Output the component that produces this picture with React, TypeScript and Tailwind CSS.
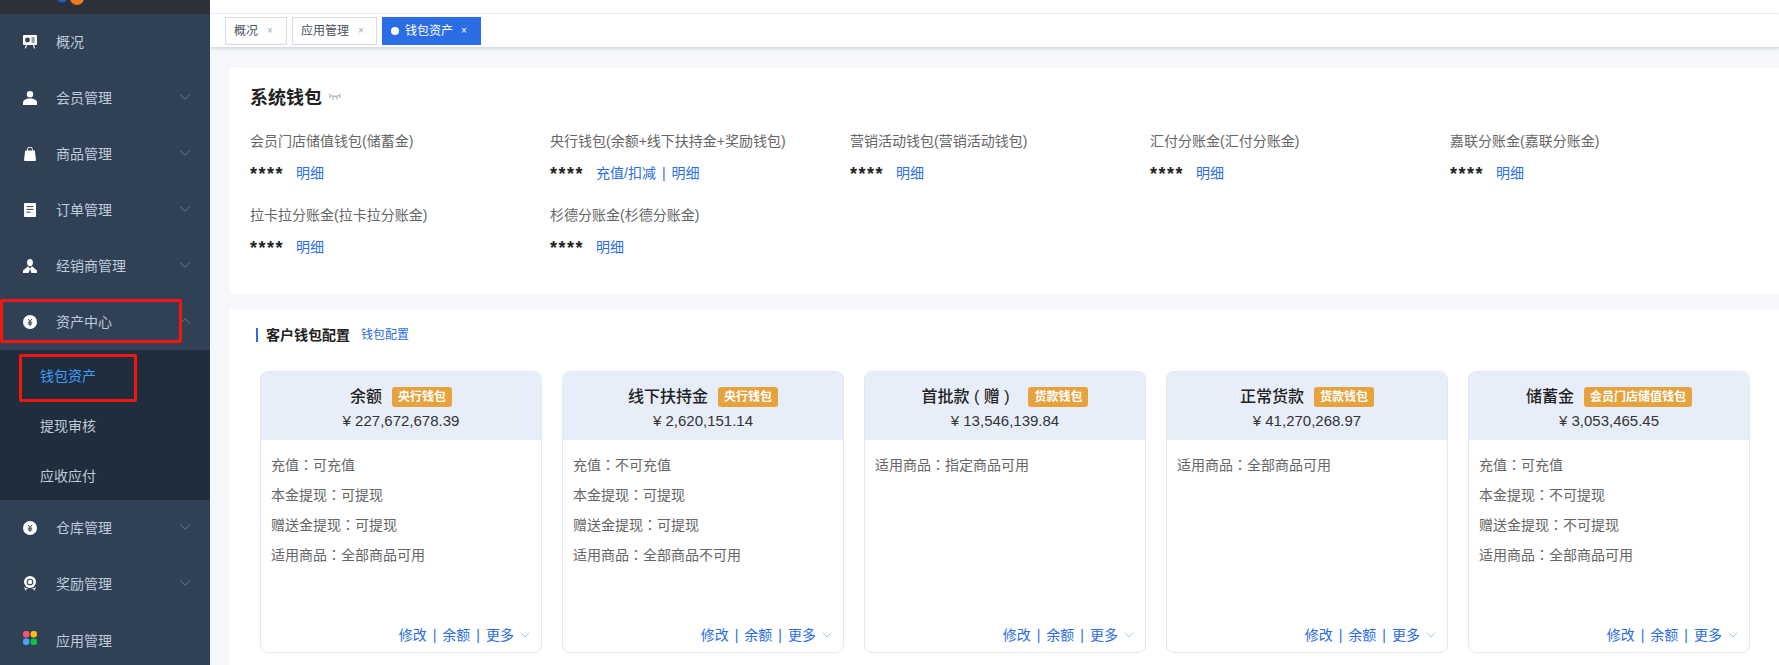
import { ChevronDown, ChevronUp } from 'lucide-react'
import type { ReactNode } from 'react'

const FONT = "font-['Liberation_Sans','Noto_Sans_CJK_SC',sans-serif]"

function BoardIcon() {
  return (
    <svg width="14" height="14" viewBox="0 0 14 14">
      <path d="M1 0h12a1 1 0 0 1 1 1v8a1 1 0 0 1-1 1H1a1 1 0 0 1-1-1V1a1 1 0 0 1 1-1z" fill="#fff" />
      <circle cx="4.5" cy="5" r="2.4" fill="#304156" />
      <path d="M8.5 3h3.2M8.5 5h3.2M8.5 7h3.2" stroke="#304156" strokeWidth="1" />
      <path d="M3.5 10 2.4 13.4M10.5 10l1.1 3.4" stroke="#fff" strokeWidth="1.1" />
    </svg>
  )
}

function UserIcon() {
  return (
    <svg width="14" height="14" viewBox="0 0 14 14">
      <circle cx="7" cy="3.2" r="3.2" fill="#fff" />
      <path d="M0 14v-2.2C0 9 2.6 7.4 7 7.4s7 1.6 7 4.4V14z" fill="#fff" />
    </svg>
  )
}

function BagIcon() {
  return (
    <svg width="14" height="14" viewBox="0 0 14 14">
      <path d="M2.2 3.4h9.6L13 13a1 1 0 0 1-1 1H2a1 1 0 0 1-1-1z" fill="#fff" />
      <path d="M4.6 4.5V2.4a2.4 2.4 0 0 1 4.8 0v2.1" fill="none" stroke="#fff" strokeWidth="1" />
    </svg>
  )
}

function DocIcon() {
  return (
    <svg width="12" height="14" viewBox="0 0 12 14">
      <rect width="12" height="14" rx="0.8" fill="#fff" />
      <path d="M2.6 3.6h6.8M2.6 6.4h6.8M2.6 9.2h4" stroke="#304156" strokeWidth="1" />
    </svg>
  )
}

function DealerIcon() {
  return (
    <svg width="14" height="14" viewBox="0 0 14 14">
      <ellipse cx="7" cy="3.6" rx="2.9" ry="3.6" fill="#fff" />
      <path d="M5 7.2 0 11.6V14h5.6L7 10l1.4 4H14v-2.4L9 7.2 7 9.5z" fill="#fff" />
    </svg>
  )
}

function CoinIcon() {
  return (
    <svg width="14" height="14" viewBox="0 0 14 14">
      <circle cx="7" cy="7" r="7" fill="#fff" />
      <path d="M5 4l2 2.4L9 4M4.8 7.2h4.4M4.8 9h4.4M7 6.4V11" fill="none" stroke="#304156" strokeWidth="1" />
    </svg>
  )
}

function AwardIcon() {
  return (
    <svg width="14" height="15" viewBox="0 0 14 15">
      <circle cx="7" cy="6" r="6" fill="#fff" />
      <circle cx="7" cy="6" r="2.8" fill="none" stroke="#304156" strokeWidth="1.1" />
      <path d="M1 11.5 3 13l1.5-.6M13 11.5 11 13l-1.5-.6M3 13l-.6 1.4M11 13l.6 1.4" fill="none" stroke="#fff" strokeWidth="1" />
    </svg>
  )
}

function AppIcon() {
  return (
    <svg width="14" height="14" viewBox="0 0 14 14" className="-translate-y-[2px]">
      <rect width="6.4" height="6.4" rx="2.4" fill="#f4566f" />
      <rect x="7.6" width="6.4" height="6.4" rx="2.4" fill="#fdbf0f" />
      <rect y="7.6" width="6.4" height="6.4" rx="2.4" fill="#4aa5f8" />
      <rect x="7.6" y="7.6" width="6.4" height="6.4" rx="2" fill="#0bc53a" />
    </svg>
  )
}

function LashIcon() {
  return (
    <svg width="14" height="8" viewBox="0 0 14 8" className="ml-[6px] -translate-y-[1px]">
      <path
        d="M1 1c2.8 3.2 9.2 3.2 12 0M2.8 2.8 1.4 5M5.2 3.9 4.6 6.6M8.8 3.9l.6 2.7M11.2 2.8 12.6 5"
        fill="none"
        stroke="#a8a8a8"
        strokeWidth="1.1"
      />
    </svg>
  )
}

interface NavItemProps {
  icon: ReactNode
  label: string
  arrow?: 'down' | 'up'
  low?: boolean
}

function NavItem({ icon, label, arrow, low }: NavItemProps) {
  return (
    <div className="flex h-[56px] items-center text-[14px] text-[#bfcbd9]">
      <div className="flex w-[56px] shrink-0 pl-[23px]">
        <div className="flex w-[14px] justify-center pb-[1px]">{icon}</div>
      </div>
      <span className={`flex-1 ${low ? 'pt-[2px]' : ''}`}>{label}</span>
      {arrow === 'down' && <ChevronDown size={18} strokeWidth={1} className="mr-[16px] -translate-y-[1px] text-[#7f8c9b]" />}
      {arrow === 'up' && <ChevronUp size={18} strokeWidth={1} className="mr-[16px] -translate-y-[1px] text-[#7f8c9b]" />}
    </div>
  )
}

function SubItem({ label, active }: { label: string; active?: boolean }) {
  return (
    <div className={`flex h-[50px] items-center pl-[40px] pt-[2px] text-[14px] ${active ? 'text-[#409eff]' : 'text-[#bfcbd9]'}`}>
      {label}
    </div>
  )
}

function Sidebar() {
  return (
    <aside className="relative h-full w-[210px] shrink-0 bg-[#304156]">
      <div className="relative h-[14px] overflow-hidden bg-[#2b3039]">
        <svg width="40" height="14" viewBox="0 0 40 14" className="absolute left-[55px] top-0">
          <circle cx="7" cy="-3" r="5.5" fill="#1f5fbf" />
          <circle cx="22" cy="-2" r="7" fill="#ed7d1a" />
        </svg>
      </div>
      <NavItem icon={<BoardIcon />} label="概况" />
      <NavItem icon={<UserIcon />} label="会员管理" arrow="down" />
      <NavItem icon={<BagIcon />} label="商品管理" arrow="down" />
      <NavItem icon={<DocIcon />} label="订单管理" arrow="down" />
      <NavItem icon={<DealerIcon />} label="经销商管理" arrow="down" />
      <NavItem icon={<CoinIcon />} label="资产中心" arrow="up" />
      <div className="bg-[#1f2d3d]">
        <SubItem label="钱包资产" active />
        <SubItem label="提现审核" />
        <SubItem label="应收应付" />
      </div>
      <NavItem icon={<CoinIcon />} label="仓库管理" arrow="down" />
      <NavItem icon={<AwardIcon />} label="奖励管理" arrow="down" />
      <NavItem icon={<AppIcon />} label="应用管理" low />

      {/* annotation boxes */}
      <div className="absolute left-0 top-[299px] h-[44px] w-[182px] rounded-[2px] border-[3px] border-[#f5150f]" />
      <div className="absolute left-[19px] top-[354px] h-[48px] w-[118px] rounded-[2px] border-[3px] border-[#f5150f]" />
    </aside>
  )
}

function Tab({ label, width, active }: { label: string; width: string; active?: boolean }) {
  if (active) {
    return (
      <div className={`flex h-[28px] items-center bg-[#2b6de5] pl-[9px] text-[12px] text-white ${width}`}>
        <span className="mr-[6px] h-[8px] w-[8px] rounded-full bg-white" />
        {label}
        <span className="ml-[8px] text-[10px] leading-none">×</span>
      </div>
    )
  }
  return (
    <div className={`flex h-[28px] items-center border border-[#d8dce5] bg-white pl-[8px] text-[12px] text-[#495060] ${width}`}>
      {label}
      <span className="ml-[9px] text-[10px] leading-none text-[#a8abb2]">×</span>
    </div>
  )
}

function TabsBar() {
  return (
    <div className="bg-white">
      <div className="h-[14px] border-b border-[#eef0f3]" />
      <div className="flex h-[34px] items-center gap-[5px] border-b border-[#d8dce5] pl-[15px] shadow-[0_1px_3px_rgba(0,21,41,0.12)]">
        <Tab label="概况" width="w-[62px]" />
        <Tab label="应用管理" width="w-[85px]" />
        <Tab label="钱包资产" width="w-[99px]" active />
      </div>
    </div>
  )
}

const systemWallets = [
  { label: '会员门店储值钱包(储蓄金)' },
  { label: '央行钱包(余额+线下扶持金+奖励钱包)', recharge: true },
  { label: '营销活动钱包(营销活动钱包)' },
  { label: '汇付分账金(汇付分账金)' },
  { label: '嘉联分账金(嘉联分账金)' },
  { label: '拉卡拉分账金(拉卡拉分账金)' },
  { label: '杉德分账金(杉德分账金)' },
]

function SystemWallets() {
  return (
    <section className="h-[226px] bg-white pl-[20px] pt-[15px]">
      <div className="flex h-[30px] items-center">
        <h2 className="text-[18px] font-bold leading-[30px] text-[#222]">系统钱包</h2>
        <LashIcon />
      </div>
      <div className="mt-[18px] grid grid-cols-[repeat(5,300px)]">
        {systemWallets.map((w) => (
          <div key={w.label} className="h-[74px]">
            <div className="h-[20px] text-[14px] leading-[20px] text-[#666]">{w.label}</div>
            <div className="mt-[12px] flex h-[20px] items-center text-[14px] text-[#2b6de5]">
              <span className="w-[46px] translate-y-[1px] text-[18px] font-bold leading-[20px] tracking-[1.5px] text-[#222]">****</span>
              {w.recharge && (
                <>
                  <span>充值/扣减</span>
                  <span className="mx-[6px]">|</span>
                </>
              )}
              <span>明细</span>
            </div>
          </div>
        ))}
      </div>
    </section>
  )
}

interface WalletCard {
  name: string
  badge: string
  amount: string
  rows: [string, string][]
}

const cards: WalletCard[] = [
  {
    name: '余额',
    badge: '央行钱包',
    amount: '227,672,678.39',
    rows: [['充值', '可充值'], ['本金提现', '可提现'], ['赠送金提现', '可提现'], ['适用商品', '全部商品可用']],
  },
  {
    name: '线下扶持金',
    badge: '央行钱包',
    amount: '2,620,151.14',
    rows: [['充值', '不可充值'], ['本金提现', '可提现'], ['赠送金提现', '可提现'], ['适用商品', '全部商品不可用']],
  },
  {
    name: '首批款 ( 赠 )  ',
    badge: '货款钱包',
    amount: '13,546,139.84',
    rows: [['适用商品', '指定商品可用']],
  },
  {
    name: '正常货款',
    badge: '货款钱包',
    amount: '41,270,268.97',
    rows: [['适用商品', '全部商品可用']],
  },
  {
    name: '储蓄金',
    badge: '会员门店储值钱包',
    amount: '3,053,465.45',
    rows: [['充值', '可充值'], ['本金提现', '不可提现'], ['赠送金提现', '不可提现'], ['适用商品', '全部商品可用']],
  },
]

function Card({ card }: { card: WalletCard }) {
  return (
    <div className="flex h-[282px] w-[282px] shrink-0 flex-col overflow-hidden rounded-[8px] border border-[#e2e6ef]">
      <div className="h-[68px] bg-[#e8eef9] pt-[13px] text-center">
        <div className="flex h-[24px] items-center justify-center gap-[10px]">
          <span className="whitespace-pre text-[16px] font-medium text-[#222]">{card.name}</span>
          <span className="flex h-[20px] items-center rounded-[3px] bg-[#e6a23c] px-[6px] text-[12px] font-bold text-white">
            {card.badge}
          </span>
        </div>
        <div className="mt-[1px] text-[15px] leading-[22px] text-[#333]">¥ {card.amount}</div>
      </div>
      <div className="flex flex-1 flex-col px-[10px] pt-[9px] text-[14px] text-[#666]">
        {card.rows.map(([k, v]) => (
          <div key={k} className="h-[30px] leading-[30px]">
            {k}
            <span className="font-['Noto_Sans_CJK_TC']">：</span>
            {v}
          </div>
        ))}
        <div className="mt-auto flex h-[20px] items-center justify-end text-[14px] text-[#2b6de5]">
          <span>修改</span>
          <span className="mx-[6px]">|</span>
          <span>余额</span>
          <span className="mx-[6px]">|</span>
          <span>更多</span>
          <ChevronDown size={16} strokeWidth={1} className="ml-[3px] mr-[-2px] text-[#7ba3ee]" />
        </div>
        <div className="h-[7px] shrink-0" />
      </div>
    </div>
  )
}

function CustomerWallets() {
  return (
    <section className="flex-1 bg-white pl-[26px] pt-[16px]">
      <div className="flex h-[20px] items-center">
        <span className="mr-[8px] h-[14px] w-[2px] bg-[#2b6de5]" />
        <span className="text-[14px] font-bold text-[#222]">客户钱包配置</span>
        <span className="ml-[11px] text-[12px] text-[#2b6de5]">钱包配置</span>
      </div>
      <div className="ml-[4px] mt-[26px] flex gap-[20px]">
        {cards.map((c) => (
          <Card key={c.name} card={c} />
        ))}
      </div>
    </section>
  )
}

export default function App() {
  return (
    <div className={`flex h-[665px] w-[1779px] overflow-hidden bg-[#f5f7fa] ${FONT}`}>
      <Sidebar />
      <main className="flex min-w-0 flex-1 flex-col">
        <TabsBar />
        <div className="flex flex-1 flex-col gap-[15px] pl-[20px] pt-[20px]">
          <SystemWallets />
          <CustomerWallets />
        </div>
      </main>
    </div>
  )
}
